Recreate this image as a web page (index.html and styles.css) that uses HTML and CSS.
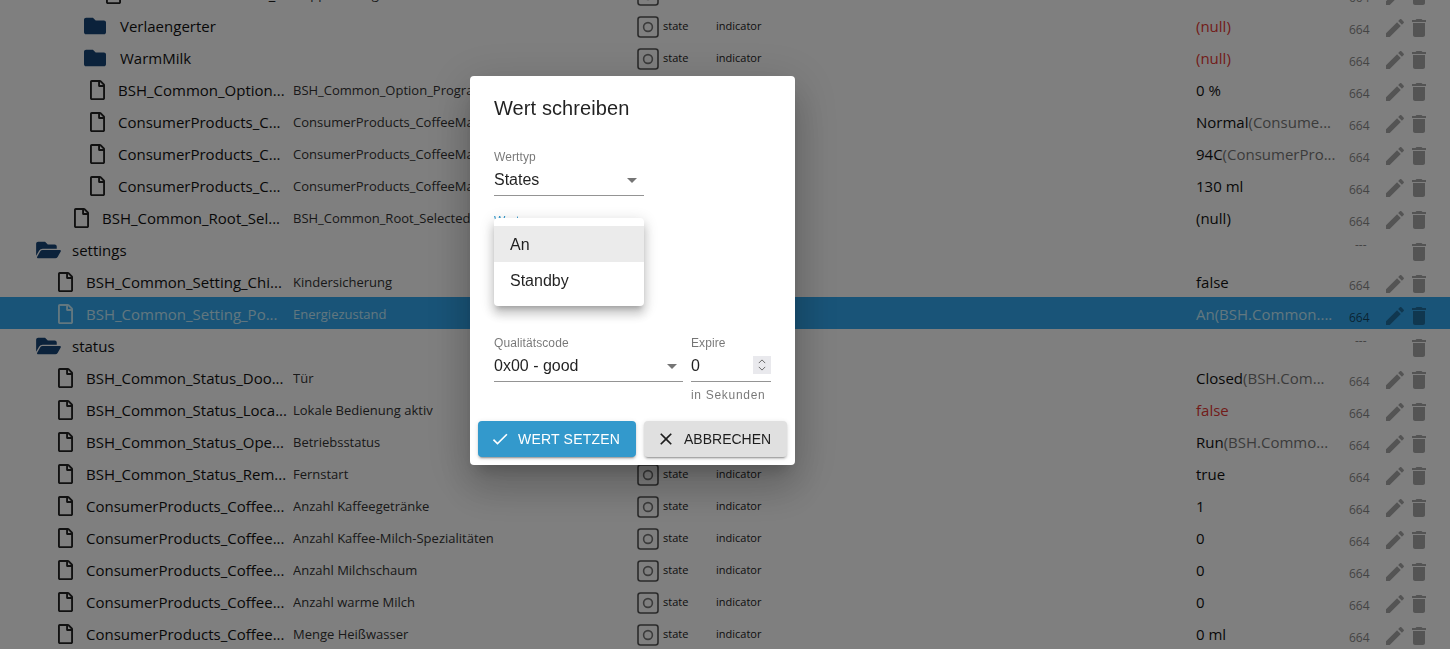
FILE: index.html
```html
<!DOCTYPE html>
<html lang="de">
<head>
    <meta charset="UTF-8">
    <meta name="viewport" content="width=device-width, initial-scale=1.0">
    <title>Wert schreiben</title>
    <link rel="stylesheet" href="styles.css">
</head>
<body>

    <svg class="sprites" xmlns="http://www.w3.org/2000/svg">
        <symbol id="i-file" viewBox="0 0 384 512"><path d="M369.9 97.9L286 14C277 5 264.8-.1 252.1-.1H48C21.5 0 0 21.5 0 48v416c0 26.5 21.5 48 48 48h288c26.5 0 48-21.5 48-48V131.9c0-12.7-5.1-25-14.1-34zM332.1 128H256V51.9l76.1 76.1zM48 464V48h160v104c0 13.3 10.7 24 24 24h104v288H48z"/></symbol>
        <symbol id="i-folder" viewBox="0 0 512 512"><path d="M464 128H272l-64-64H48C21.49 64 0 85.49 0 112v288c0 26.51 21.49 48 48 48h416c26.51 0 48-21.49 48-48V176c0-26.51-21.49-48-48-48z"/></symbol>
        <symbol id="i-folder-open" viewBox="0 0 576 512"><path d="M572.694 292.093L500.27 416.248A63.997 63.997 0 0 1 444.989 448H45.025c-18.523 0-30.064-20.093-20.731-36.093l72.424-124.155A64 64 0 0 1 152 256h399.964c18.523 0 30.064 20.093 20.73 36.093zM152 224h328v-48c0-26.51-21.49-48-48-48H272l-64-64H48C21.49 64 0 85.49 0 112v278.046l69.077-118.418C86.214 242.25 117.989 224 152 224z"/></symbol>
        <symbol id="i-edit" viewBox="0 0 24 24"><path d="M3 17.25V21h3.75L17.81 9.94l-3.75-3.75L3 17.25zM20.71 7.04c.39-.39.39-1.02 0-1.41l-2.34-2.34c-.39-.39-1.02-.39-1.41 0l-1.83 1.83 3.75 3.75 1.83-1.83z"/></symbol>
        <symbol id="i-trash" viewBox="0 0 24 24"><path d="M6 19c0 1.1.9 2 2 2h8c1.1 0 2-.9 2-2V7H6v12zM19 4h-3.5l-1-1h-5l-1 1H5v2h14V4z"/></symbol>
        <symbol id="i-state" viewBox="0 0 22 22"><rect x="1" y="1" width="20" height="20" rx="2.5" fill="none" stroke="#555" stroke-width="1.6"/><circle cx="11" cy="11" r="4.4" fill="none" stroke="#777" stroke-width="1.6"/></symbol>
    </svg>

    <div class="tree">
        <div class="row">
            <div class="name lvl-4"><svg class="ico-file"><use href="#i-file"/></svg><span>ConsumerProducts_C...</span></div>
            <div class="desc">Doppelt Menge</div>
            <div class="type"><svg class="ico-state"><use href="#i-state"/></svg><span class="type-name">state</span><span>indicator</span></div>
            <div class="value">1</div>
            <div class="acl">664</div>
            <div class="actions"><svg><use href="#i-edit"/></svg><svg><use href="#i-trash"/></svg></div>
        </div>
        <div class="row">
            <div class="name lvl-folder"><svg class="ico-folder"><use href="#i-folder"/></svg><span>Verlaengerter</span></div>
            <div class="desc"></div>
            <div class="type"><svg class="ico-state"><use href="#i-state"/></svg><span class="type-name">state</span><span>indicator</span></div>
            <div class="value null">(null)</div>
            <div class="acl">664</div>
            <div class="actions"><svg><use href="#i-edit"/></svg><svg><use href="#i-trash"/></svg></div>
        </div>
        <div class="row">
            <div class="name lvl-folder"><svg class="ico-folder"><use href="#i-folder"/></svg><span>WarmMilk</span></div>
            <div class="desc"></div>
            <div class="type"><svg class="ico-state"><use href="#i-state"/></svg><span class="type-name">state</span><span>indicator</span></div>
            <div class="value null">(null)</div>
            <div class="acl">664</div>
            <div class="actions"><svg><use href="#i-edit"/></svg><svg><use href="#i-trash"/></svg></div>
        </div>
        <div class="row">
            <div class="name lvl-3"><svg class="ico-file"><use href="#i-file"/></svg><span>BSH_Common_Option...</span></div>
            <div class="desc">BSH_Common_Option_ProgramProgress</div>
            <div class="type"><svg class="ico-state"><use href="#i-state"/></svg><span class="type-name">state</span><span>indicator</span></div>
            <div class="value">0 %</div>
            <div class="acl">664</div>
            <div class="actions"><svg><use href="#i-edit"/></svg><svg><use href="#i-trash"/></svg></div>
        </div>
        <div class="row">
            <div class="name lvl-3"><svg class="ico-file"><use href="#i-file"/></svg><span>ConsumerProducts_C...</span></div>
            <div class="desc">ConsumerProducts_CoffeeMaker_Option</div>
            <div class="type"><svg class="ico-state"><use href="#i-state"/></svg><span class="type-name">state</span><span>indicator</span></div>
            <div class="value">Normal<small>(Consume...</small></div>
            <div class="acl">664</div>
            <div class="actions"><svg><use href="#i-edit"/></svg><svg><use href="#i-trash"/></svg></div>
        </div>
        <div class="row">
            <div class="name lvl-3"><svg class="ico-file"><use href="#i-file"/></svg><span>ConsumerProducts_C...</span></div>
            <div class="desc">ConsumerProducts_CoffeeMaker_Option</div>
            <div class="type"><svg class="ico-state"><use href="#i-state"/></svg><span class="type-name">state</span><span>indicator</span></div>
            <div class="value">94C<small>(ConsumerPro...</small></div>
            <div class="acl">664</div>
            <div class="actions"><svg><use href="#i-edit"/></svg><svg><use href="#i-trash"/></svg></div>
        </div>
        <div class="row">
            <div class="name lvl-3"><svg class="ico-file"><use href="#i-file"/></svg><span>ConsumerProducts_C...</span></div>
            <div class="desc">ConsumerProducts_CoffeeMaker_Option</div>
            <div class="type"><svg class="ico-state"><use href="#i-state"/></svg><span class="type-name">state</span><span>indicator</span></div>
            <div class="value">130 ml</div>
            <div class="acl">664</div>
            <div class="actions"><svg><use href="#i-edit"/></svg><svg><use href="#i-trash"/></svg></div>
        </div>
        <div class="row">
            <div class="name lvl-2"><svg class="ico-file"><use href="#i-file"/></svg><span>BSH_Common_Root_Sel...</span></div>
            <div class="desc">BSH_Common_Root_SelectedProgram</div>
            <div class="type"><svg class="ico-state"><use href="#i-state"/></svg><span class="type-name">state</span><span>indicator</span></div>
            <div class="value">(null)</div>
            <div class="acl">664</div>
            <div class="actions"><svg><use href="#i-edit"/></svg><svg><use href="#i-trash"/></svg></div>
        </div>
        <div class="row">
            <div class="name lvl-open"><svg class="ico-open"><use href="#i-folder-open"/></svg><span>settings</span></div>
            <div class="desc"></div>
            <div class="type"></div>
            <div class="value"></div>
            <div class="acl none">---</div>
            <div class="actions"><svg class="blank"></svg><svg><use href="#i-trash"/></svg></div>
        </div>
        <div class="row">
            <div class="name lvl-1"><svg class="ico-file"><use href="#i-file"/></svg><span>BSH_Common_Setting_Chi...</span></div>
            <div class="desc">Kindersicherung</div>
            <div class="type"><svg class="ico-state"><use href="#i-state"/></svg><span class="type-name">state</span><span>indicator</span></div>
            <div class="value">false</div>
            <div class="acl">664</div>
            <div class="actions"><svg><use href="#i-edit"/></svg><svg><use href="#i-trash"/></svg></div>
        </div>
        <div class="row selected">
            <div class="name lvl-1"><svg class="ico-file"><use href="#i-file"/></svg><span>BSH_Common_Setting_Po...</span></div>
            <div class="desc">Energiezustand</div>
            <div class="type"><svg class="ico-state"><use href="#i-state"/></svg><span class="type-name">state</span><span>indicator</span></div>
            <div class="value">An<small>(BSH.Common....</small></div>
            <div class="acl">664</div>
            <div class="actions"><svg><use href="#i-edit"/></svg><svg><use href="#i-trash"/></svg></div>
        </div>
        <div class="row">
            <div class="name lvl-open"><svg class="ico-open"><use href="#i-folder-open"/></svg><span>status</span></div>
            <div class="desc"></div>
            <div class="type"></div>
            <div class="value"></div>
            <div class="acl none">---</div>
            <div class="actions"><svg class="blank"></svg><svg><use href="#i-trash"/></svg></div>
        </div>
        <div class="row">
            <div class="name lvl-1"><svg class="ico-file"><use href="#i-file"/></svg><span>BSH_Common_Status_Doo...</span></div>
            <div class="desc">Tür</div>
            <div class="type"><svg class="ico-state"><use href="#i-state"/></svg><span class="type-name">state</span><span>indicator</span></div>
            <div class="value">Closed<small>(BSH.Com...</small></div>
            <div class="acl">664</div>
            <div class="actions"><svg><use href="#i-edit"/></svg><svg><use href="#i-trash"/></svg></div>
        </div>
        <div class="row">
            <div class="name lvl-1"><svg class="ico-file"><use href="#i-file"/></svg><span>BSH_Common_Status_Loca...</span></div>
            <div class="desc">Lokale Bedienung aktiv</div>
            <div class="type"><svg class="ico-state"><use href="#i-state"/></svg><span class="type-name">state</span><span>indicator</span></div>
            <div class="value null">false</div>
            <div class="acl">664</div>
            <div class="actions"><svg><use href="#i-edit"/></svg><svg><use href="#i-trash"/></svg></div>
        </div>
        <div class="row">
            <div class="name lvl-1"><svg class="ico-file"><use href="#i-file"/></svg><span>BSH_Common_Status_Ope...</span></div>
            <div class="desc">Betriebsstatus</div>
            <div class="type"><svg class="ico-state"><use href="#i-state"/></svg><span class="type-name">state</span><span>indicator</span></div>
            <div class="value">Run<small>(BSH.Commo...</small></div>
            <div class="acl">664</div>
            <div class="actions"><svg><use href="#i-edit"/></svg><svg><use href="#i-trash"/></svg></div>
        </div>
        <div class="row">
            <div class="name lvl-1"><svg class="ico-file"><use href="#i-file"/></svg><span>BSH_Common_Status_Rem...</span></div>
            <div class="desc">Fernstart</div>
            <div class="type"><svg class="ico-state"><use href="#i-state"/></svg><span class="type-name">state</span><span>indicator</span></div>
            <div class="value">true</div>
            <div class="acl">664</div>
            <div class="actions"><svg><use href="#i-edit"/></svg><svg><use href="#i-trash"/></svg></div>
        </div>
        <div class="row">
            <div class="name lvl-1"><svg class="ico-file"><use href="#i-file"/></svg><span>ConsumerProducts_Coffee...</span></div>
            <div class="desc">Anzahl Kaffeegetränke</div>
            <div class="type"><svg class="ico-state"><use href="#i-state"/></svg><span class="type-name">state</span><span>indicator</span></div>
            <div class="value">1</div>
            <div class="acl">664</div>
            <div class="actions"><svg><use href="#i-edit"/></svg><svg><use href="#i-trash"/></svg></div>
        </div>
        <div class="row">
            <div class="name lvl-1"><svg class="ico-file"><use href="#i-file"/></svg><span>ConsumerProducts_Coffee...</span></div>
            <div class="desc">Anzahl Kaffee-Milch-Spezialitäten</div>
            <div class="type"><svg class="ico-state"><use href="#i-state"/></svg><span class="type-name">state</span><span>indicator</span></div>
            <div class="value">0</div>
            <div class="acl">664</div>
            <div class="actions"><svg><use href="#i-edit"/></svg><svg><use href="#i-trash"/></svg></div>
        </div>
        <div class="row">
            <div class="name lvl-1"><svg class="ico-file"><use href="#i-file"/></svg><span>ConsumerProducts_Coffee...</span></div>
            <div class="desc">Anzahl Milchschaum</div>
            <div class="type"><svg class="ico-state"><use href="#i-state"/></svg><span class="type-name">state</span><span>indicator</span></div>
            <div class="value">0</div>
            <div class="acl">664</div>
            <div class="actions"><svg><use href="#i-edit"/></svg><svg><use href="#i-trash"/></svg></div>
        </div>
        <div class="row">
            <div class="name lvl-1"><svg class="ico-file"><use href="#i-file"/></svg><span>ConsumerProducts_Coffee...</span></div>
            <div class="desc">Anzahl warme Milch</div>
            <div class="type"><svg class="ico-state"><use href="#i-state"/></svg><span class="type-name">state</span><span>indicator</span></div>
            <div class="value">0</div>
            <div class="acl">664</div>
            <div class="actions"><svg><use href="#i-edit"/></svg><svg><use href="#i-trash"/></svg></div>
        </div>
        <div class="row">
            <div class="name lvl-1"><svg class="ico-file"><use href="#i-file"/></svg><span>ConsumerProducts_Coffee...</span></div>
            <div class="desc">Menge Heißwasser</div>
            <div class="type"><svg class="ico-state"><use href="#i-state"/></svg><span class="type-name">state</span><span>indicator</span></div>
            <div class="value">0 ml</div>
            <div class="acl">664</div>
            <div class="actions"><svg><use href="#i-edit"/></svg><svg><use href="#i-trash"/></svg></div>
        </div>
    </div>

    <div class="backdrop">
        <div class="dialog">
            <h2 class="dialog-title">Wert schreiben</h2>
            <div class="dialog-body">
                <div class="field field-type">
                    <label>Werttyp</label>
                    <div class="select">States<i class="arrow"></i></div>
                </div>
                <div class="field field-value">
                    <label class="focused">Wert</label>
                    <div class="select"></div>
                    <div class="menu">
                        <div class="menu-item active">An</div>
                        <div class="menu-item">Standby</div>
                    </div>
                </div>
                <div class="field-row">
                    <div class="field field-quality">
                        <label>Qualitätscode</label>
                        <div class="select">0x00 - good<i class="arrow"></i></div>
                    </div>
                    <div class="field field-expire">
                        <label>Expire</label>
                        <div class="select">0
                            <span class="spin">
                                <svg viewBox="0 0 10 6"><path d="M1 5l4-4 4 4"/></svg>
                                <svg viewBox="0 0 10 6"><path d="M1 1l4 4 4-4"/></svg>
                            </span>
                        </div>
                        <p class="helper">in Sekunden</p>
                    </div>
                </div>
            </div>
            <div class="dialog-actions">
                <button class="btn btn-primary"><svg viewBox="0 0 24 24"><path d="M9 16.17L4.83 12l-1.41 1.41L9 19 21 7l-1.41-1.41z"/></svg>Wert setzen</button>
                <button class="btn btn-cancel"><svg viewBox="0 0 24 24"><path d="M19 6.41L17.59 5 12 10.59 6.41 5 5 6.41 10.59 12 5 17.59 6.41 19 12 13.41 17.59 19 19 17.59 13.41 12z"/></svg>Abbrechen</button>
            </div>
        </div>
    </div>

</body>
</html>
```

FILE: styles.css
```css
html, body {
    height: 100%;
    margin: 0;
    overflow: hidden;
}
body {
    font-family: "Open Sans", "Noto Sans", sans-serif;
    background-color: #fff;
    color: #111;
}
.sprites {
    display: none;
}

/* Object tree */
.tree {
    margin-top: -23px;
}
.row {
    display: grid;
    grid-template-columns: 293px 343px 560px 153px 34px 1fr;
    box-sizing: border-box;
    height: 32px;
    padding-top: 2px;
    align-items: center;
    white-space: nowrap;
}
.name {
    display: flex;
    align-items: center;
    font-size: 15px;
    overflow: hidden;
}
.lvl-open { padding-left: 36px; }
.lvl-folder { padding-left: 84px; }
.lvl-1 { padding-left: 58px; }
.lvl-2 { padding-left: 74px; }
.lvl-3 { padding-left: 90px; }
.lvl-4 { padding-left: 106px; }
.ico-file {
    width: 15px;
    height: 20px;
    margin-right: 13px;
    fill: #222;
    flex: none;
}
.ico-folder {
    width: 22px;
    height: 22px;
    margin-right: 14px;
    fill: #164477;
    flex: none;
}
.ico-open {
    width: 25px;
    height: 22px;
    margin-right: 11px;
    fill: #164477;
    flex: none;
}
.desc {
    font-size: 13px;
    color: #333;
    overflow: hidden;
}
.type {
    display: flex;
    align-items: center;
    font-size: 11px;
    color: #222;
}
.type span {
    margin-top: -2px;
}
.ico-state {
    width: 22px;
    height: 22px;
    margin: 2px 4px 0 1px;
}
.type-name {
    width: 53px;
}
.value {
    font-size: 15px;
}
.value small {
    font-size: 15px;
    color: #777;
}
.value.null {
    color: #e53935;
}
.acl {
    font-size: 12px;
    color: #888;
    padding-top: 6px;
}
.acl.none {
    padding: 0 0 0 6px;
    margin-top: -12px;
}
.actions {
    display: flex;
    padding-top: 4px;
}
.actions svg {
    width: 24px;
    height: 24px;
    fill: rgba(0, 0, 0, 0.34);
}
.selected {
    background-color: #32a8f0;
    color: #c4eeff;
}
.selected .ico-file {
    fill: #c4eeff;
}
.selected .desc,
.selected .value small {
    color: #c4eeff;
}
.selected .acl {
    color: rgba(0, 0, 0, 0.6);
}

/* Dialog */
.backdrop {
    position: fixed;
    top: 0;
    left: 0;
    right: 0;
    bottom: 0;
    background: rgba(0, 0, 0, 0.5);
}
.dialog {
    position: absolute;
    top: 76px;
    left: 470px;
    width: 325px;
    height: 389px;
    display: flex;
    flex-direction: column;
    box-sizing: border-box;
    background: #fff;
    border-radius: 4px;
    box-shadow: 0 11px 15px -7px rgba(0, 0, 0, 0.2), 0 24px 38px 3px rgba(0, 0, 0, 0.14), 0 9px 46px 8px rgba(0, 0, 0, 0.12);
    font-family: "Liberation Sans", Arial, sans-serif;
    color: rgba(0, 0, 0, 0.87);
}
.dialog-title {
    margin: 0;
    padding: 20px 24px 0;
    height: 44px;
    font-size: 20px;
    font-weight: 400;
    line-height: 24px;
    letter-spacing: 0.1px;
}
.dialog-body {
    flex: 1;
    padding: 10px 24px 0;
}
.field {
    position: relative;
}
.field label {
    display: block;
    font-size: 12px;
    line-height: 14px;
    letter-spacing: 0.1px;
    color: rgba(0, 0, 0, 0.54);
}
.field label.focused {
    color: #3399cc;
}
.select {
    position: relative;
    display: flex;
    align-items: center;
    height: 31px;
    border-bottom: 1px solid rgba(0, 0, 0, 0.42);
    font-size: 16px;
}
.arrow {
    position: absolute;
    right: 7px;
    top: 14px;
    border-left: 5px solid transparent;
    border-right: 5px solid transparent;
    border-top: 5px solid rgba(0, 0, 0, 0.54);
}
.field-type {
    width: 150px;
}
.field-value {
    width: 150px;
    margin-top: 18px;
    height: 122px;
}
.menu {
    position: absolute;
    top: 4px;
    left: 0;
    width: 150px;
    padding: 8px 0;
    background: #fff;
    border-radius: 4px;
    box-shadow: 0 5px 5px -3px rgba(0, 0, 0, 0.2), 0 8px 10px 1px rgba(0, 0, 0, 0.14), 0 3px 14px 2px rgba(0, 0, 0, 0.12);
}
.menu-item {
    height: 36px;
    line-height: 38px;
    padding-left: 16px;
    font-size: 16px;
}
.menu-item.active {
    background: #ebebeb;
}
.field-row {
    display: flex;
    gap: 8px;
}
.field-row .arrow {
    right: 6px;
}
.field-quality {
    width: 189px;
}
.field-expire {
    width: 80px;
}
.spin {
    position: absolute;
    right: 0;
    top: 6px;
    width: 18px;
    height: 18px;
    display: flex;
    flex-direction: column;
    align-items: center;
    justify-content: center;
    gap: 2px;
    background: #e9e9ed;
}
.spin svg {
    width: 8px;
    height: 5px;
    fill: none;
    stroke: #666;
    stroke-width: 1.2;
}
.helper {
    margin: 6px 0 0;
    font-size: 12px;
    line-height: 14px;
    letter-spacing: 0.7px;
    color: rgba(0, 0, 0, 0.54);
}
.dialog-actions {
    display: flex;
    gap: 8px;
    padding: 0 8px 8px;
}
.btn {
    display: flex;
    align-items: center;
    flex: none;
    height: 36px;
    padding: 0 16px 0 12px;
    border: none;
    border-radius: 4px;
    background-color: #e0e0e0;
    color: rgba(0, 0, 0, 0.87);
    font-family: "Liberation Sans", Arial, sans-serif;
    font-size: 14px;
    letter-spacing: 0.2px;
    text-transform: uppercase;
    white-space: nowrap;
    box-shadow: 0 3px 1px -2px rgba(0, 0, 0, 0.2), 0 2px 2px 0 rgba(0, 0, 0, 0.14), 0 1px 5px 0 rgba(0, 0, 0, 0.12);
}
.btn svg {
    width: 20px;
    height: 20px;
    margin-right: 8px;
    fill: currentColor;
}
.btn-primary {
    background-color: #3399cc;
    color: #fff;
}
.btn-cancel {
    letter-spacing: 0;
}
```
